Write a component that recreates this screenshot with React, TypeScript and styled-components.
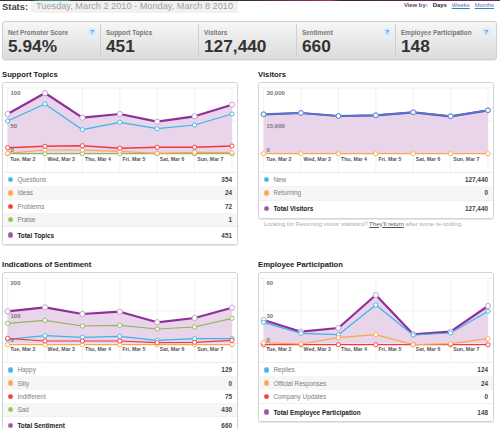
import * as React from 'react';
import styled, { createGlobalStyle } from 'styled-components';

const BLUE = '#3bb4e8';
const ORANGE = '#fba64a';
const RED = '#f5373f';
const GREEN = '#93b35f';
const PURPLE = '#8f2f9b';
const DAYS = ['Tue, Mar 2', 'Wed, Mar 3', 'Thu, Mar 4', 'Fri, Mar 5', 'Sat, Mar 6', 'Sun, Mar 7'];

interface Series {
  color: string;
  ring?: string;
  width?: number;
  radius?: number;
  fill?: boolean;
  points: number[];
}

interface Row {
  color: string;
  label: string;
  value: string;
}

const GlobalStyle = createGlobalStyle`
  html, body {
    margin: 0;
    padding: 0;
    background: #ffffff;
  }
  body {
    font-family: "Liberation Sans", Arial, sans-serif;
  }
`;

const Page = styled.div`
  width: 500px;
  height: 429px;
  overflow: hidden;
  position: relative;
`;

const TopStrip = styled.div`
  height: 1px;
  background: linear-gradient(90deg, #333 0, #333 30px, #3a8c8c 40px, #3a8c8c 68px, #333 72px, #2c2c3c 240px, #7a2a60 300px, #a03a50 330px, #3a2030 340px, #5a2a5a 420px, #6a2a6a 500px);
`;

const Header = styled.div`
  height: 20px;
  padding: 0 0 0 2px;
  display: flex;
  align-items: flex-start;
`;

const StatsLabel = styled.div`
  font-size: 9.4px;
  line-height: 12px;
  font-weight: bold;
  color: #444;
`;

const DatePill = styled.div`
  margin-left: 3px;
  width: 207px;
  height: 12px;
  padding-left: 5px;
  box-sizing: border-box;
  background: #f1f1f1;
  border-radius: 0 0 3px 3px;
  color: #a0a0a0;
  font-size: 9.2px;
  line-height: 11px;
  white-space: nowrap;
`;

const ViewBy = styled.div`
  margin-left: auto;
  padding: 0 6px 0 0;
  display: flex;
  font-size: 5.9px;
  line-height: 8px;
  color: #555;
  font-weight: bold;
`;

const ViewItem = styled.span<{ $link?: boolean }>`
  margin-left: 5px;
  color: ${p => (p.$link ? '#4a76b0' : '#222')};
  font-weight: ${p => (p.$link ? 'normal' : 'bold')};
  text-decoration: ${p => (p.$link ? 'underline' : 'none')};
`;

const SummaryBar = styled.div`
  margin: 0 3px 0 2px;
  height: 39px;
  display: flex;
  box-sizing: border-box;
  border: 1px solid #d0d0d0;
  border-radius: 3px;
  background: linear-gradient(#f6f6f6, #dcdcdc);
  box-shadow: 0 1px 1px rgba(0, 0, 0, 0.08);
`;

const SummaryCell = styled.div<{ $width: number }>`
  position: relative;
  width: ${p => p.$width}px;
  flex: none;
  box-sizing: border-box;
  padding: 5px 0 0 5px;
  margin: 2px 0;
  border-right: 1px solid #cfcfcf;
  &:last-child {
    border-right: 0;
  }
`;

const SummaryLabel = styled.div`
  font-size: 6.4px;
  line-height: 8px;
  font-weight: bold;
  color: #777;
  white-space: nowrap;
`;

const SummaryValue = styled.div`
  margin-top: 1px;
  font-size: 17.3px;
  line-height: 17px;
  font-weight: bold;
  color: #333;
`;

const HelpBadge = styled.span`
  position: absolute;
  top: 4px;
  right: 4px;
  width: 8px;
  height: 8px;
  border-radius: 2px;
  background: #dcebfb;
  color: #3a7ac8;
  font-size: 6px;
  line-height: 8px;
  font-weight: bold;
  text-align: center;
  ${SummaryCell}:last-child & {
    right: 6px;
  }
`;

const Columns = styled.div`
  margin-top: 8px;
  padding-left: 2px;
  display: grid;
  grid-template-columns: 236px 236px;
  column-gap: 20px;
  row-gap: 13px;
  align-items: start;
`;

const Section = styled.section``;

const SectionTitle = styled.h2`
  margin: 0;
  height: 14px;
  font-size: 7.7px;
  line-height: 13px;
  font-weight: bold;
  color: #222;
`;

const Panel = styled.div`
  box-sizing: border-box;
  border: 1px solid #d4d4d4;
  border-radius: 3px;
  background: #fff;
  box-shadow: 0 1px 1px rgba(0, 0, 0, 0.1);
`;

const ChartSvg = styled.svg`
  display: block;
  width: 234px;
  height: 89px;
  border-bottom: 1px solid #eeeeee;
`;

const AxisText = styled.text`
  font-size: 6px;
  font-weight: bold;
  fill: #777;
`;

const DayText = styled.text`
  font-size: 5.2px;
  font-weight: bold;
  fill: #555;
`;

const LegendRow = styled.div<{ $shade: boolean }>`
  height: 13.3px;
  padding: 0 5px 0 5px;
  display: flex;
  align-items: center;
  background: ${p => (p.$shade ? '#f6f6f6' : '#ffffff')};
  font-size: 6.4px;
  color: #808080;
`;

const TotalRow = styled(LegendRow)`
  height: 18px;
  padding-bottom: 1px;
  box-sizing: border-box;
  border-top: 1px solid #f0f0f0;
  color: #222;
  font-weight: bold;
`;

const Dot = styled.span<{ $color: string }>`
  width: 3.4px;
  height: 3.4px;
  margin: 0 5px 0 1px;
  border-radius: 50%;
  background: ${p => p.$color};
  box-shadow: 0 0 0 1px ${p => p.$color}cc;
`;

const RowValue = styled.span`
  margin-left: auto;
  color: #444;
  font-weight: bold;
`;

const Note = styled.div`
  margin: 1px 0 0 6px;
  font-size: 6.05px;
  line-height: 8px;
  color: #aaa;
  white-space: nowrap;
`;

const NoteLink = styled.span`
  color: #555;
  text-decoration: underline;
`;

const px = (i: number) => 4.6 + 37.4 * i;

const Chart = ({ series, axis, top }: { series: Series[]; axis: string[]; top: number }) => {
  const lines = series.map(s => ({
    ...s,
    coords: s.points.map((y, i) => [px(i), y - top] as const),
  }));
  return (
    <ChartSvg viewBox='0 0 234 89'>
      {[5, 38, 70.6].map(y => <line key={y} x1={0} x2={234} y1={y} y2={y} stroke='#eeeeee' strokeWidth={0.8}/>)}
      {[0, 1, 2, 3, 4, 5, 6].map(i => <line key={i} x1={px(i)} x2={px(i)} y1={5} y2={89} stroke='#eeeeee' strokeWidth={0.8}/>)}
      {lines.filter(l => l.fill).map(l => (
        <polygon
          key='fill'
          fill='#e8d5ea'
          points={`${px(0)},70.6 ${l.coords.map(c => c.join(',')).join(' ')} ${px(6)},70.6`}
        />
      ))}
      {lines.map(l => (
        <polyline
          key={l.color}
          fill='none'
          stroke={l.color}
          strokeWidth={l.width || 1.2}
          strokeLinejoin='round'
          points={l.coords.map(c => c.join(',')).join(' ')}
        />
      ))}
      {lines.map(l => l.coords.map((c, i) => (
        <circle
          key={`${l.color}-${i}`}
          cx={c[0]}
          cy={c[1]}
          r={l.radius || 2.1}
          fill='#ffffff'
          stroke={l.ring || l.color}
          strokeWidth={0.9}
        />
      )))}
      <AxisText x={7.5} y={11.7}>{axis[0]}</AxisText>
      <AxisText x={7.5} y={44.5}>{axis[1]}</AxisText>
      <AxisText x={7.5} y={69}>{axis[2]}</AxisText>
      {DAYS.map((d, i) => <DayText key={d} x={px(i) + 2.6} y={77.6}>{d}</DayText>)}
    </ChartSvg>
  );
};

const Legend = ({ rows, total }: { rows: Row[]; total: Row }) => (
  <>
    {rows.map((r, i) => (
      <LegendRow key={r.label} $shade={i % 2 === 1}>
        <Dot $color={r.color}/>
        {r.label}
        <RowValue>{r.value}</RowValue>
      </LegendRow>
    ))}
    <TotalRow $shade={false}>
      <Dot $color={total.color}/>
      {total.label}
      <RowValue>{total.value}</RowValue>
    </TotalRow>
  </>
);

const purple = (points: number[]): Series => ({
  color: PURPLE, ring: '#c596cc', width: 2.2, radius: 2.6, fill: true, points,
});

const shift = (points: number[], by: number) => points.map(p => p - by);

const supportSeries: Series[] = [
  purple([115, 94, 118.7, 115, 122.7, 117.3, 105.7]),
  { color: BLUE, points: [122, 105, 130.7, 123.3, 129.7, 126, 115] },
  { color: GREEN, points: [154.7, 154.7, 154.7, 154.7, 154.7, 154.7, 154.7] },
  { color: ORANGE, points: [154.3, 151, 151, 152.3, 154.3, 153.3, 153.7] },
  { color: RED, width: 1.4, points: [148.7, 147.3, 146.7, 149.3, 148.3, 148.3, 147] },
];

const visitorSeries: Series[] = [
  purple([115.3, 114, 117, 116.3, 113.3, 117.3, 111.3]),
  { color: '#3f86d8', width: 1.5, radius: 2.3, points: [115.3, 114, 117, 116.3, 113.3, 117.3, 111.3] },
  { color: ORANGE, width: 1.3, points: [154.7, 154.7, 154.7, 154.7, 154.7, 154.7, 154.7] },
];

const sentimentSeries: Series[] = [
  purple([311.3, 307.3, 314, 311.7, 322.3, 318, 307.7]),
  { color: GREEN, points: [323.3, 320.3, 326, 325.3, 329, 327, 318.3] },
  { color: BLUE, points: [339.3, 335.7, 337.3, 336.3, 340.3, 338.7, 338.7] },
  { color: ORANGE, width: 1.3, points: [344.7, 344.7, 344.7, 344.7, 344.7, 344.7, 344.7] },
  { color: RED, points: [338.3, 341, 341, 341, 342.7, 342.3, 340.3] },
];

const employeeSeries: Series[] = [
  purple([320, 331.7, 328, 295, 334.3, 331.7, 306]),
  { color: BLUE, points: [322.3, 333.3, 334.7, 305, 335, 333, 311.3] },
  { color: RED, width: 1.3, points: [344.7, 344.7, 344.7, 344.7, 344.7, 344.7, 344.7] },
  { color: ORANGE, points: [342.7, 344, 337.7, 334.7, 344.7, 343.7, 338.7] },
];

const summary = [
  { label: 'Net Promoter Score', value: '5.94%', width: 98, help: true },
  { label: 'Support Topics', value: '451', width: 98, help: false },
  { label: 'Visitors', value: '127,440', width: 98, help: false },
  { label: 'Sentiment', value: '660', width: 99, help: true },
  { label: 'Employee Participation', value: '148', width: 100, help: true },
];

const App = () => (
  <Page>
    <GlobalStyle/>
    <TopStrip/>
    <Header>
      <StatsLabel>Stats:</StatsLabel>
      <DatePill>Tuesday, March 2 2010 - Monday, March 8 2010</DatePill>
      <ViewBy>
        View by:
        <ViewItem>Days</ViewItem>
        <ViewItem $link>Weeks</ViewItem>
        <ViewItem $link>Months</ViewItem>
      </ViewBy>
    </Header>
    <SummaryBar>
      {summary.map(s => (
        <SummaryCell key={s.label} $width={s.width}>
          <SummaryLabel>{s.label}</SummaryLabel>
          <SummaryValue>{s.value}</SummaryValue>
          {s.help ? <HelpBadge>?</HelpBadge> : ''}
        </SummaryCell>
      ))}
    </SummaryBar>
    <Columns>
      <Section>
        <SectionTitle>Support Topics</SectionTitle>
        <Panel>
          <Chart series={supportSeries} axis={['100', '50', '0']} top={84}/>
          <Legend
            rows={[
              { color: BLUE, label: 'Questions', value: '354' },
              { color: ORANGE, label: 'Ideas', value: '24' },
              { color: RED, label: 'Problems', value: '72' },
              { color: '#8fc24f', label: 'Praise', value: '1' },
            ]}
            total={{ color: '#a04ca8', label: 'Total Topics', value: '451' }}
          />
        </Panel>
      </Section>
      <Section>
        <SectionTitle>Visitors</SectionTitle>
        <Panel>
          <Chart series={visitorSeries} axis={['30,000', '15,000', '0']} top={84}/>
          <Legend
            rows={[
              { color: BLUE, label: 'New', value: '127,440' },
              { color: ORANGE, label: 'Returning', value: '0' },
            ]}
            total={{ color: '#a04ca8', label: 'Total Visitors', value: '127,440' }}
          />
        </Panel>
        <Note>Looking for Returning visitor statistics? <NoteLink>They'll return</NoteLink> after some re-tooling.</Note>
      </Section>
      <Section>
        <SectionTitle>Indications of Sentiment</SectionTitle>
        <Panel>
          <Chart series={sentimentSeries.map(s => ({ ...s, points: shift(s.points, 189) }))} axis={['200', '100', '0']} top={84}/>
          <Legend
            rows={[
              { color: BLUE, label: 'Happy', value: '129' },
              { color: ORANGE, label: 'Silly', value: '0' },
              { color: RED, label: 'Indifferent', value: '75' },
              { color: '#8fc24f', label: 'Sad', value: '430' },
            ]}
            total={{ color: '#a04ca8', label: 'Total Sentiment', value: '660' }}
          />
        </Panel>
      </Section>
      <Section>
        <SectionTitle>Employee Participation</SectionTitle>
        <Panel>
          <Chart series={employeeSeries.map(s => ({ ...s, points: shift(s.points, 189) }))} axis={['60', '30', '0']} top={84}/>
          <Legend
            rows={[
              { color: BLUE, label: 'Replies', value: '124' },
              { color: ORANGE, label: 'Official Responses', value: '24' },
              { color: RED, label: 'Company Updates', value: '0' },
            ]}
            total={{ color: '#a04ca8', label: 'Total Employee Participation', value: '148' }}
          />
        </Panel>
      </Section>
    </Columns>
  </Page>
);

export default App;
